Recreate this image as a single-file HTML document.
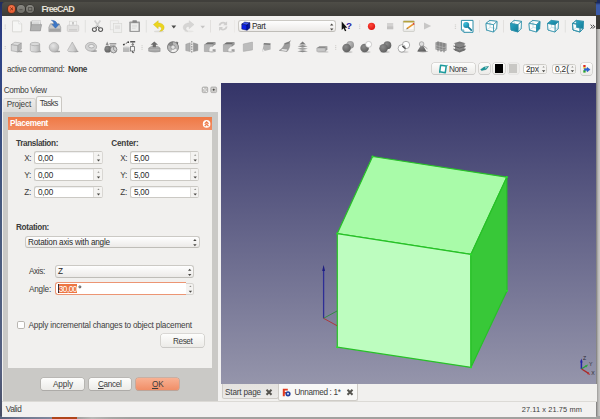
<!DOCTYPE html>
<html>
<head>
<meta charset="utf-8">
<style>
html,body{margin:0;padding:0;overflow:hidden;}
body{width:600px;height:419px;overflow:hidden;background:#2b2a28;font-family:"Liberation Sans",sans-serif;font-size:8px;color:#3c3c3c;position:relative;}
.a{position:absolute;box-sizing:border-box;}
.lbl{position:absolute;white-space:nowrap;}
.spin{position:absolute;box-sizing:border-box;height:12.5px;background:#fff;border:1px solid #cbc9c4;border-right-color:#d9d7d3;border-radius:2.5px;box-shadow:inset 0 1px 1px rgba(0,0,0,0.07);}
.spin i{position:absolute;right:0;top:0;bottom:0;width:7.8px;background:#f4f3f1;border-left:1px solid #e0deda;border-radius:0 1px 1px 0;}
.combo{position:absolute;box-sizing:border-box;background:linear-gradient(#fefefe,#eceae8);border:1px solid #cbc9c4;border-bottom-color:#bfbdb8;border-radius:3px;}
.btn{position:absolute;box-sizing:border-box;background:linear-gradient(#fdfdfc,#ecebe8);border:0 solid transparent;box-shadow:0 0 0 0.6px rgba(110,108,100,0.36),0 0.8px 0.6px rgba(0,0,0,0.10);border-radius:2.5px;}
</style>
</head>
<body>
<div id="root" style="position:absolute;left:0;top:0;width:600px;height:419px;overflow:hidden;">
<!-- desktop edges -->
<div class="a" style="left:0;top:0;width:3px;height:419px;background:linear-gradient(#1f2b58 0,#27367a 16px,#2e4388 50px,#354a82 105px,#475a7e 205px,#505f80 300px,#566080 370px,#454b62 419px);"></div>
<div class="a" style="left:596px;top:0;width:4px;height:419px;background:linear-gradient(90deg,#7c7b7a 0,#8a8988 0.6px,#b6b5b3 2px,#cbcac8 4px);"></div>
<div class="a" style="left:596px;top:15px;width:4px;height:13.8px;background:#3a3936;"></div>
<div class="a" style="left:596px;top:0;width:4px;height:15.3px;background:linear-gradient(#1c2a5c 0,#1c2a5c 2.5px,#3a5aa8 5px,#3a5aa8 100%);"></div>
<div class="a" style="left:0;top:0;width:597px;height:2px;background:#403f3b;"></div>
<div class="a" style="left:0;top:416px;width:600px;height:3px;background:linear-gradient(90deg,#56607c 0,#737b92 25px,#7f879c 50px,#a3a2a0 78px,#bab9b7 92px,#a8a7a5 112px,#a2a19f 130px,#a2a19f 100%);"></div>
<div class="a" style="left:52px;top:416.6px;width:25px;height:2.4px;background:#b0451a;"></div>

<!-- window -->
<div class="a" style="left:1.6px;top:10px;width:594.8px;height:406.7px;background:#f2f1f0;"></div>
<div class="a" style="left:1.6px;top:1.6px;width:594.9px;height:14.2px;background:linear-gradient(#4e4d47,#3c3b37);border-radius:3px 3px 0 0;"></div>
<div class="a" style="left:7.7px;top:4.9px;width:7.8px;height:7.8px;border-radius:50%;background:radial-gradient(circle at 50% 35%,#f4794f,#e24d22);box-shadow:0 0 0 0.6px #6b2710;"></div>
<div class="a" style="left:17.1px;top:4.9px;width:7.8px;height:7.8px;border-radius:50%;background:linear-gradient(#8a8983,#6c6b65);box-shadow:0 0 0 0.6px #2d2c29;"></div>
<div class="a" style="left:26.3px;top:4.9px;width:7.8px;height:7.8px;border-radius:50%;background:linear-gradient(#8a8983,#6c6b65);box-shadow:0 0 0 0.6px #2d2c29;"></div>
<svg class="a" style="left:0;top:0" width="60" height="16" viewBox="0 0 60 16">
  <path d="M10.3 7.5 L13 10.2 M13 7.5 L10.3 10.2" stroke="#6b2710" stroke-width="0.9" fill="none"/>
  <path d="M19.3 9.7 H22.5" stroke="#504f4a" stroke-width="0.9"/>
  <rect x="28.6" y="7.4" width="3.2" height="3.2" fill="none" stroke="#504f4a" stroke-width="0.8"/>
</svg>

<!-- combo view pane -->
<div class="a" style="left:2.7px;top:111.7px;width:215px;height:289.5px;background:#cac9c6;"></div>
<!-- tabs -->
<div class="a" style="left:2.5px;top:98px;width:33px;height:13.6px;background:linear-gradient(#eeedeb,#dddbd8);border:1px solid #d6d4d0;border-left-color:#e4e2df;border-bottom:none;border-radius:2.5px 2.5px 0 0;"></div>
<div class="a" style="left:35.5px;top:96.3px;width:26px;height:15.4px;background:#f8f8f7;border:1px solid #cbc8c3;border-bottom:none;border-radius:2.5px 2.5px 0 0;"></div>
<!-- float/close -->
<svg class="a" style="left:200px;top:85px" width="20" height="10" viewBox="200 85 20 10">
  <rect x="202.2" y="87" width="5.5" height="5.6" rx="1.1" fill="#c4c3c1" stroke="#a2a19f" stroke-width="0.7"/>
  <circle cx="203.7" cy="88.5" r="0.65" fill="#fff"/><circle cx="205" cy="89.9" r="0.7" fill="#fff"/><circle cx="206.3" cy="91.3" r="0.65" fill="#fff"/>
  <circle cx="206.2" cy="88.5" r="0.5" fill="#e2e1df"/><circle cx="203.8" cy="91.2" r="0.5" fill="#e2e1df"/>
  <rect x="210.8" y="87" width="5.8" height="5.6" rx="1.1" fill="#c9c8c6" stroke="#a2a19f" stroke-width="0.7"/>
  <path d="M212.2 88.3 l3 3 M215.2 88.3 l-3 3" stroke="#ecebe9" stroke-width="0.8"/>
  <circle cx="213.7" cy="89.8" r="1.05" fill="#4c4b47"/>
</svg>

<!-- group -->
<div class="a" style="left:8px;top:117px;width:204.2px;height:12.5px;background:linear-gradient(#ef7945,#f28d63);"></div>
<div class="a" style="left:8px;top:129.5px;width:204.2px;height:238.5px;background:#f1f0ee;"></div>
<svg class="a" style="left:200px;top:117px" width="12" height="13" viewBox="200 117 12 13">
  <circle cx="206.6" cy="123.9" r="3.8" fill="#fffdfb"/>
  <path d="M204.7 123.7 L206.6 121.8 L208.5 123.7 M204.7 126.1 L206.6 124.2 L208.5 126.1" stroke="#ee7a48" stroke-width="1.25" fill="none"/>
</svg>

<!-- spin boxes -->
<div class="spin" style="left:34.3px;top:151.3px;width:68.3px;"><i></i></div>
<div class="spin" style="left:34.3px;top:168.3px;width:68.3px;"><i></i></div>
<div class="spin" style="left:34.3px;top:185.5px;width:68.3px;"><i></i></div>
<div class="spin" style="left:130.3px;top:151.3px;width:69px;"><i></i></div>
<div class="spin" style="left:130.3px;top:168.3px;width:69px;"><i></i></div>
<div class="spin" style="left:130.3px;top:185.5px;width:69px;"><i></i></div>

<div class="combo" style="left:25px;top:235.8px;width:174.5px;height:12px;"></div>
<div class="combo" style="left:55px;top:265.4px;width:139.3px;height:12.2px;"></div>
<div class="a" style="left:186px;top:282.5px;width:8.4px;height:12.5px;background:#f4f3f1;border:1px solid #d6d4d0;border-left:none;border-radius:0 2.5px 2.5px 0;"></div>
<div class="a" style="left:55px;top:282.4px;width:131.4px;height:12.7px;background:#fff;border:1.2px solid #ec9573;border-right:none;border-radius:3px 0 0 3px;"></div>
<div class="a" style="left:58px;top:284.3px;width:19.1px;height:8.8px;background:#ec7643;"></div>
<div class="a" style="left:57.8px;top:284.3px;width:0.9px;height:8.8px;background:#3a2a24;"></div>

<svg class="a" style="left:76px;top:283px" width="8" height="8" viewBox="76 283 8 8"><circle cx="79.9" cy="286.9" r="1" fill="none" stroke="#3a3a3a" stroke-width="0.9"/></svg>
<!-- checkbox -->
<div class="a" style="left:17.2px;top:321.2px;width:7.5px;height:7.5px;background:#fff;border:1px solid #b9b6b1;border-radius:1.8px;"></div>
<div class="btn" style="left:161.2px;top:334.2px;width:43.3px;height:13.3px;"></div>
<div class="btn" style="left:41.4px;top:377.9px;width:42.9px;height:12.4px;"></div>
<div class="btn" style="left:88.5px;top:377.9px;width:42.9px;height:12.4px;"></div>
<div class="btn" style="left:135.6px;top:377.9px;width:43.3px;height:12.4px;background:linear-gradient(#f8b193,#f18e67);box-shadow:0 0 0 0.6px rgba(190,90,50,0.45),0 0.8px 0.6px rgba(0,0,0,0.10);"></div>

<!-- 3D view -->
<div class="a" style="left:221.2px;top:83.2px;width:375.2px;height:301px;background:linear-gradient(#343468,#9595ab);"></div>
<svg class="a" style="left:221px;top:83px;" width="376" height="301" viewBox="221 83 376 301">
  <g stroke="#27c127" stroke-width="1.2" stroke-linejoin="round">
  <polygon points="372.6,156.5 506.8,177.2 470.9,254.4 337.3,233.6" fill="#a9fba9"/>
  <polygon points="337.3,233.6 470.9,254.4 471,367.3 337.3,347.2" fill="#bdfdbf"/>
  <polygon points="470.9,254.4 506.8,177.2 507,290.8 471,367.3" fill="#38c838"/>
  </g>
  <g fill="#2ade2a"><circle cx="372.6" cy="156.5" r="1.1"/><circle cx="506.8" cy="177.2" r="1.1"/><circle cx="470.9" cy="254.4" r="1.1"/><circle cx="337.3" cy="233.6" r="1.1"/><circle cx="337.3" cy="347.2" r="1.1"/><circle cx="471" cy="367.3" r="1.1"/><circle cx="507" cy="290.8" r="1.1"/></g>
  <line x1="323.6" y1="318.3" x2="323.6" y2="269" stroke="#2e2e96" stroke-width="1.3"/>
  <polygon points="322.2,271 325,271 323.6,264.8" fill="#1d1d80"/>
  <line x1="323.6" y1="318.3" x2="337" y2="311" stroke="#2c8a3c" stroke-width="0.9"/>
  <line x1="323.6" y1="318.3" x2="337" y2="325.7" stroke="#b03030" stroke-width="0.9"/>
  <!-- corner axis -->
  <g fill="none">
    <line x1="581.4" y1="369" x2="581.4" y2="360.5" stroke="#2323a6" stroke-width="1.5"/>
    <line x1="581.6" y1="368.8" x2="586.2" y2="366" stroke="#2a9a3a" stroke-width="1.3"/>
    <line x1="581.6" y1="369" x2="588.6" y2="373.4" stroke="#a82a2a" stroke-width="1.3"/>
  </g>
  <polygon points="580.2,362.4 582.6,362.4 581.4,358.6" fill="#2323a6"/>
  <polygon points="585,365.4 586.4,367.4 588.2,364.6" fill="#2fa83f"/>
  <polygon points="587,374 588.2,372.1 590.4,374.9" fill="#b83030"/>
  <g font-family="Liberation Sans" font-size="5.2" fill="#2c2c34">
    <text x="583.1" y="359.8">Z</text><text x="588.9" y="366.2">Y</text><text x="591.2" y="375.2">X</text>
  </g>
</svg>

<!-- bottom tabs -->
<div class="a" style="left:221px;top:384.2px;width:375.5px;height:17px;background:#f1f0ee;"></div>
<div class="a" style="left:221.5px;top:384.2px;width:57px;height:15px;background:linear-gradient(#e4e2df,#ebeae8);border:1px solid #cfccc7;border-top:none;border-radius:0 0 2.5px 2.5px;"></div>
<div class="a" style="left:278px;top:384.2px;width:80.3px;height:16.8px;background:#f8f8f7;border:1px solid #cfccc7;border-top:none;border-radius:0 0 2.5px 2.5px;"></div>
<svg class="a" style="left:260px;top:386px" width="100" height="12" viewBox="260 386 100 12">
  <path d="M266.5 389.8 L271.5 394.8 M271.5 389.8 L266.5 394.8" stroke="#55544f" stroke-width="2"/>
  <path d="M347.5 389.8 L352.5 394.8 M352.5 389.8 L347.5 394.8" stroke="#55544f" stroke-width="2"/>
  <path d="M282.8 388.8 h5 v1.8 h-3 v1.3 h2.2 v1.6 h-2.2 v2.7 h-2z" fill="#e03a20"/>
  <circle cx="288" cy="393.8" r="2.6" fill="#1f3f9e"/><circle cx="288" cy="393.8" r="1" fill="#dfe6f5"/>
</svg>
<!-- status bar line -->
<div class="a" style="left:2px;top:401px;width:594.5px;height:0.8px;background:#dcdad6;"></div>

<!-- toolbar 3 controls -->
<div class="btn" style="left:432.4px;top:62.7px;width:42.3px;height:11.8px;"></div>
<div class="btn" style="left:479px;top:62.7px;width:10.7px;height:11.8px;"></div>
<div class="btn" style="left:493.2px;top:62.7px;width:11.6px;height:11.8px;"></div>
<div class="a" style="left:494.8px;top:64.4px;width:8.5px;height:8.7px;background:#000;"></div>
<div class="btn" style="left:507.6px;top:62.7px;width:11.3px;height:11.8px;background:#eeedeb;box-shadow:0 0 0 0.6px rgba(110,108,100,0.14);"></div>
<div class="a" style="left:509.1px;top:64.4px;width:8.3px;height:8.9px;background:#c9c8c5;"></div>
<div class="spin" style="left:522.7px;top:63.5px;width:24.5px;height:10.6px;border-color:#cdcbc6;"><i style="width:7px"></i></div>
<div class="spin" style="left:551.8px;top:63.5px;width:24.2px;height:10.6px;border-color:#cdcbc6;"><i style="width:7px"></i></div>
<div class="btn" style="left:581.2px;top:62.6px;width:10.4px;height:12px;"></div>
<svg class="a" style="left:430px;top:60px" width="166" height="18" viewBox="430 60 166 18">
  <path d="M440.6 65.2 l5.6 0.9 l-0.9 6.6 l-5.6 -0.9z" fill="#fff" stroke="#1c9a9c" stroke-width="1.5" stroke-linejoin="round"/>
  <path d="M439.8 71.9 l-0.3 1.2 M446.9 66 l0.4 -1.1" stroke="#1c9a9c" stroke-width="0.9"/>
  <path d="M480.6 69.6 l3.6 -2.6 l4.4 -0.6 l-2.4 3 l-4.6 1.2z" fill="#17969a" stroke="#0f6e72" stroke-width="0.4"/>
  <path d="M484.8 67.4 l2.4 -0.4 l-1.4 1.8z" fill="#bfe9ea"/>
  <rect x="583.3" y="65" width="2.3" height="2.2" fill="#e02a1e"/>
  <rect x="583.3" y="67.2" width="2.3" height="1.5" fill="#e8d020"/>
  <rect x="583.3" y="70.2" width="2.3" height="2.4" fill="#2aa82a"/>
  <path d="M584.2 68.6 h2.8 v-1.3 l3.2 2.3 l-3.2 2.3 v-1.3 h-2.8z" fill="#2a62d8" stroke="#1c459c" stroke-width="0.3"/>
</svg>

<!-- workbench combo -->
<div class="combo" style="left:238.3px;top:20.3px;width:98px;height:11.8px;"></div>

<svg class="a" style="left:0;top:0" width="600" height="419" viewBox="0 0 600 419">
<path d="M97.40 155.85 h2.2 l-1.1 -1.5z" fill="#8e8d89"/>
<path d="M96.80 159.40 h3.4 l-1.7 2z" fill="#484743"/>
<path d="M97.40 172.85 h2.2 l-1.1 -1.5z" fill="#8e8d89"/>
<path d="M96.80 176.40 h3.4 l-1.7 2z" fill="#484743"/>
<path d="M97.40 190.05 h2.2 l-1.1 -1.5z" fill="#8e8d89"/>
<path d="M96.80 193.60 h3.4 l-1.7 2z" fill="#484743"/>
<path d="M194.10 155.85 h2.2 l-1.1 -1.5z" fill="#8e8d89"/>
<path d="M193.50 159.40 h3.4 l-1.7 2z" fill="#484743"/>
<path d="M194.10 172.85 h2.2 l-1.1 -1.5z" fill="#8e8d89"/>
<path d="M193.50 176.40 h3.4 l-1.7 2z" fill="#484743"/>
<path d="M194.10 190.05 h2.2 l-1.1 -1.5z" fill="#8e8d89"/>
<path d="M193.50 193.60 h3.4 l-1.7 2z" fill="#484743"/>
<path d="M189.30 287.12 h2.2 l-1.1 -1.5z" fill="#8e8d89"/>
<path d="M188.70 290.63 h3.4 l-1.7 2z" fill="#484743"/>
<path d="M542.50 67.48 h2.2 l-1.1 -1.5z" fill="#8e8d89"/>
<path d="M541.90 70.23 h3.4 l-1.7 2z" fill="#484743"/>
<path d="M571.30 67.48 h2.2 l-1.1 -1.5z" fill="#8e8d89"/>
<path d="M570.70 70.23 h3.4 l-1.7 2z" fill="#484743"/>
<path d="M193.20 241.10 h3.4 l-1.7 -2z" fill="#484743"/>
<path d="M193.20 244.20 h3.4 l-1.7 2z" fill="#484743"/>
<path d="M188.00 270.78 h3.4 l-1.7 -2z" fill="#484743"/>
<path d="M188.00 273.94 h3.4 l-1.7 2z" fill="#484743"/>
<path d="M330.00 25.52 h3.4 l-1.7 -2z" fill="#484743"/>
<path d="M330.00 28.56 h3.4 l-1.7 2z" fill="#484743"/>
</svg>
<svg class="a" style="left:0;top:15px" width="600" height="45" viewBox="0 15 600 45">
<defs>
  <linearGradient id="gv" x1="0" y1="0" x2="1" y2="0"><stop offset="0" stop-color="#dedede"/><stop offset="0.6" stop-color="#cfcfcf"/><stop offset="1" stop-color="#b2b2b2"/></linearGradient>
  <radialGradient id="gs" cx="0.4" cy="0.35" r="0.7"><stop offset="0" stop-color="#e6e6e6"/><stop offset="1" stop-color="#b4b4b4"/></radialGradient>
  <radialGradient id="gd" cx="0.4" cy="0.35" r="0.75"><stop offset="0" stop-color="#8c8c8c"/><stop offset="1" stop-color="#5a5a5a"/></radialGradient>
  <radialGradient id="gr" cx="0.4" cy="0.35" r="0.7"><stop offset="0" stop-color="#ff4a3a"/><stop offset="1" stop-color="#dc1010"/></radialGradient>
  <radialGradient id="gt" cx="0.35" cy="0.3" r="0.8"><stop offset="0" stop-color="#3cc0dc"/><stop offset="1" stop-color="#1480a0"/></radialGradient>
  <linearGradient id="tf" x1="0" y1="0" x2="1" y2="1"><stop offset="0" stop-color="#2aa6c4"/><stop offset="1" stop-color="#117c98"/></linearGradient>
  <radialGradient id="gs2" cx="0.4" cy="0.35" r="0.7"><stop offset="0" stop-color="#bcbcbc"/><stop offset="1" stop-color="#8e8e8e"/></radialGradient>
</defs>
<!-- handles -->
<g fill="#d3d2cf">
  <rect x="4.6" y="24.6" width="1.3" height="1"/><rect x="4.6" y="26.4" width="1.3" height="1"/><rect x="4.6" y="28.2" width="1.3" height="1"/>
  <rect x="4.6" y="46" width="1.3" height="1"/><rect x="4.6" y="47.8" width="1.3" height="1"/>
  <rect x="141.4" y="45.2" width="1.3" height="1"/><rect x="141.4" y="47" width="1.3" height="1"/><rect x="141.4" y="48.8" width="1.3" height="1"/>
  <rect x="335" y="45.2" width="1.3" height="1"/><rect x="335" y="47" width="1.3" height="1"/><rect x="335" y="48.8" width="1.3" height="1"/>
  <rect x="359" y="24.4" width="1.3" height="1"/><rect x="359" y="26.2" width="1.3" height="1"/><rect x="359" y="28" width="1.3" height="1"/>
  <rect x="454.8" y="24.4" width="1.3" height="1"/><rect x="454.8" y="26.2" width="1.3" height="1"/><rect x="454.8" y="28" width="1.3" height="1"/>
</g>
<!-- separators -->
<g stroke="#dddcd9" stroke-width="0.8">
  <path d="M85.3 20 V32.5 M146.3 20 V32.5 M210.5 20 V32.5 M479.5 20 V32.5 M503.5 20 V32.5 M565.3 20 V32.5"/>
</g>
<path d="M234.5 20 V32.5" stroke="#e8e7e4" stroke-width="0.8"/>

<!-- ROW 1 -->
<!-- new -->
<path d="M12.5 20.9 h6.3 l2.9 2.9 v8 h-9.2z" fill="#f6f6f5" stroke="#d4d3d1" stroke-width="0.8"/>
<path d="M18.8 20.9 v2.9 h2.9" fill="#fff" stroke="#d4d3d1" stroke-width="0.6"/>
<!-- open -->
<path d="M30.4 21.6 h3.8 l0.9 1 h5.4 v8.2 h-10.1z" fill="#9a9a9a"/>
<rect x="32" y="20.6" width="8.2" height="6" fill="#e6e6e6" stroke="#b8b8b8" stroke-width="0.4"/>
<path d="M33 22.2 h6 M33 23.6 h6" stroke="#c4c4c4" stroke-width="0.5"/>
<path d="M30.2 30.9 l1.3 -6.3 h10.2 l-1.4 6.3z" fill="#b0b0b0" stroke="#8a8a8a" stroke-width="0.5"/>
<!-- save -->
<path d="M48.9 27.3 l1.6 -3.6 h8.6 l1.6 3.6 v4.3 h-11.8z" fill="#c9c9c9" stroke="#8f8f8f" stroke-width="0.6"/>
<rect x="49.3" y="28.6" width="11" height="2.8" fill="#a3a3a3"/>
<path d="M51.3 20.3 c3.6 0 5.6 1.6 5.7 4 h2.2 l-3.7 3.9 l-3.7 -3.9 h2.2 c0 -1.7 -0.9 -3.2 -2.7 -4z" fill="#3d77c7" stroke="#2a5aa0" stroke-width="0.4"/>
<!-- print -->
<rect x="69.3" y="21.2" width="7.4" height="4.6" fill="#f4f4f3" stroke="#d2d1cf" stroke-width="0.6"/>
<rect x="67.3" y="25.2" width="11.4" height="6.3" rx="1" fill="#e1e0df" stroke="#c6c5c3" stroke-width="0.6"/>
<rect x="69" y="29" width="8" height="1.6" fill="#cfcecd"/>
<rect x="72" y="22" width="2" height="2.6" fill="#c9c8c7"/>
<!-- cut -->
<path d="M94.6 20.4 L100 28 M100.4 20.4 L95 28" stroke="#d0d0cf" stroke-width="1.7" fill="none"/>
<ellipse cx="94.4" cy="29.6" rx="2" ry="1.9" fill="none" stroke="#595959" stroke-width="1.1"/>
<ellipse cx="100.6" cy="29.6" rx="2" ry="1.9" fill="none" stroke="#595959" stroke-width="1.1"/>
<path d="M96 28 l1.5 -1.6 l1.5 1.6" stroke="#595959" stroke-width="0.9" fill="none"/>
<!-- copy -->
<rect x="110.3" y="20.8" width="8" height="9" fill="#f1f1f0" stroke="#dddcda" stroke-width="0.7"/>
<rect x="113.4" y="23.4" width="8.3" height="9" fill="#efefee" stroke="#d8d7d5" stroke-width="0.7"/>
<rect x="115" y="25.4" width="5" height="3.6" fill="#e2e1e0"/>
<!-- paste -->
<rect x="129.3" y="21.4" width="10.7" height="10.7" rx="0.8" fill="#9b9b9b"/>
<rect x="130.8" y="23.2" width="7.7" height="7.7" fill="#eeeeed"/>
<rect x="132.4" y="20.3" width="4.5" height="2.5" rx="0.6" fill="#878787"/>
<path d="M132 25.3 h5 M132 26.8 h5 M132 28.3 h3.5" stroke="#d0d0d0" stroke-width="0.6"/>
<!-- undo -->
<ellipse cx="159" cy="31.4" rx="5" ry="0.9" fill="#dcdbd8"/>
<path d="M153.4 24.6 L158.2 20.7 V23 C162.4 23 164.4 25.4 164.1 28 C163.8 30.1 162 31.3 159.6 31.3 C161.2 30.3 161.8 28.9 161.3 27.8 C160.8 26.8 159.8 26.5 158.2 26.5 V28.7 Z" fill="#ecd51e" stroke="#cdb812" stroke-width="0.4"/>
<path d="M171.4 25.6 h4.8 l-2.4 3z" fill="#4a4a49"/>
<!-- redo (faded) -->
<ellipse cx="189" cy="31.4" rx="4.6" ry="0.8" fill="#e6e5e3"/>
<path d="M194 24.6 L189.2 20.7 V23 C185 23 183 25.4 183.3 28 C183.6 30.1 185.4 31.3 187.8 31.3 C186.2 30.3 185.6 28.9 186.1 27.8 C186.6 26.8 187.6 26.5 189.2 26.5 V28.7 Z" fill="#d6d5d4" stroke="#cac9c8" stroke-width="0.4"/>
<path d="M200.4 25.8 h4.6 l-2.3 2.8z" fill="#c6c5c4"/>
<!-- refresh (faded) -->
<path d="M218.6 25.6 a4.6 4.6 0 0 1 7.2 -3 l1.3 -1.3 v4 h-4 l1.4 -1.4 a2.7 2.7 0 0 0 -4 1.7z" fill="#cfcecd"/>
<path d="M227.6 26.6 a4.6 4.6 0 0 1 -7.2 3 l-1.3 1.3 v-4 h4 l-1.4 1.4 a2.7 2.7 0 0 0 4 -1.7z" fill="#cfcecd"/>
<!-- what's this -->
<path d="M341.7 21.6 v8.3 l1.9 -1.7 l1.4 3.1 l1.3 -0.6 l-1.4 -3 h2.4z" fill="#111"/>
<text x="345.9" y="29.2" font-family="Liberation Sans" font-weight="bold" font-size="9.8" fill="#2626a4">?</text>
<!-- record -->
<circle cx="371.5" cy="26.3" r="3.6" fill="url(#gr)"/>
<!-- stop -->
<rect x="387" y="23" width="6.2" height="6.2" fill="#d3d2d1"/>
<rect x="387" y="26.4" width="6.2" height="2.8" fill="#c2c1c0"/>
<!-- edit macro -->
<rect x="403.3" y="20.9" width="11" height="10.5" rx="0.6" fill="#fbfbf9" stroke="#bcbbb6" stroke-width="0.7"/>
<rect x="403.3" y="20.9" width="11" height="1.6" fill="#b4a23c"/>
<path d="M403.6 30 h10.4" stroke="#dad9d5" stroke-width="0.8"/>
<path d="M407.3 28.4 L413 24.4" stroke="#e8982c" stroke-width="1.7"/>
<path d="M413 24.4 l1.2 -0.9" stroke="#d83a2a" stroke-width="1.7"/>
<path d="M406.3 29.2 l1.6 -0.3 l-0.9 -1.1z" fill="#5a4a2a"/>
<!-- play -->
<path d="M424 22.4 L431.2 26 L424 29.6z" fill="#c8c7c6"/>
<!-- zoom fit -->
<path d="M461.4 20.4 h11.6 v11.9 h-9.2 l-2.4 -2.4z" fill="#fff" stroke="#2b8ea8" stroke-width="1"/>
<path d="M461.4 29.9 h2.4 v2.4" fill="none" stroke="#2b8ea8" stroke-width="0.7"/>
<path d="M468 26.8 L471.3 30.2" stroke="#187a96" stroke-width="1.7" stroke-linecap="round"/>
<circle cx="466.2" cy="24.9" r="3" fill="url(#gt)"/>
<!-- view cubes -->
<polygon points="489.8,20.4 497.0,21.4 496.6,28.6 490.1,27.4" fill="none" stroke="#2b8ea8" stroke-width="0.7" stroke-linejoin="round"/>
<polygon points="486.0,23.4 489.8,20.4 490.1,27.4 486.5,30.0" fill="none" stroke="#2b8ea8" stroke-width="0.7" stroke-linejoin="round"/>
<polygon points="486.5,30.0 490.1,27.4 496.6,28.6 493.5,32.0" fill="none" stroke="#2b8ea8" stroke-width="0.7" stroke-linejoin="round"/>
<polygon points="486.0,23.4 489.8,20.4 497.0,21.4 493.5,24.7" fill="#ffffff" stroke="#2b8ea8" stroke-width="0.7" stroke-linejoin="round" fill-opacity="0.75"/>
<polygon points="493.5,24.7 497.0,21.4 496.6,28.6 493.5,32.0" fill="#ffffff" stroke="#2b8ea8" stroke-width="0.7" stroke-linejoin="round" fill-opacity="0.75"/>
<polygon points="486.0,23.4 493.5,24.7 493.5,32.0 486.5,30.0" fill="#ffffff" stroke="#2b8ea8" stroke-width="0.7" stroke-linejoin="round" fill-opacity="0.75"/>
<polygon points="514.3,20.4 521.5,21.4 521.1,28.6 514.6,27.4" fill="none" stroke="#2b8ea8" stroke-width="0.7" stroke-linejoin="round"/>
<polygon points="510.5,23.4 514.3,20.4 514.6,27.4 511.0,30.0" fill="none" stroke="#2b8ea8" stroke-width="0.7" stroke-linejoin="round"/>
<polygon points="511.0,30.0 514.6,27.4 521.1,28.6 518.0,32.0" fill="none" stroke="#2b8ea8" stroke-width="0.7" stroke-linejoin="round"/>
<polygon points="510.5,23.4 514.3,20.4 521.5,21.4 518.0,24.7" fill="#ffffff" stroke="#2b8ea8" stroke-width="0.7" stroke-linejoin="round" fill-opacity="0.75"/>
<polygon points="518.0,24.7 521.5,21.4 521.1,28.6 518.0,32.0" fill="#ffffff" stroke="#2b8ea8" stroke-width="0.7" stroke-linejoin="round" fill-opacity="0.75"/>
<polygon points="510.5,23.4 518.0,24.7 518.0,32.0 511.0,30.0" fill="url(#tf)" stroke="#2b8ea8" stroke-width="0.7" stroke-linejoin="round"/>
<polygon points="532.8,20.4 540.0,21.4 539.6,28.6 533.1,27.4" fill="none" stroke="#2b8ea8" stroke-width="0.7" stroke-linejoin="round"/>
<polygon points="529.0,23.4 532.8,20.4 533.1,27.4 529.5,30.0" fill="none" stroke="#2b8ea8" stroke-width="0.7" stroke-linejoin="round"/>
<polygon points="529.5,30.0 533.1,27.4 539.6,28.6 536.5,32.0" fill="none" stroke="#2b8ea8" stroke-width="0.7" stroke-linejoin="round"/>
<polygon points="529.0,23.4 532.8,20.4 540.0,21.4 536.5,24.7" fill="#ffffff" stroke="#2b8ea8" stroke-width="0.7" stroke-linejoin="round" fill-opacity="0.75"/>
<polygon points="529.0,23.4 536.5,24.7 536.5,32.0 529.5,30.0" fill="#ffffff" stroke="#2b8ea8" stroke-width="0.7" stroke-linejoin="round" fill-opacity="0.75"/>
<polygon points="536.5,24.7 540.0,21.4 539.6,28.6 536.5,32.0" fill="url(#tf)" stroke="#2b8ea8" stroke-width="0.7" stroke-linejoin="round"/>
<polygon points="551.3,20.4 558.5,21.4 558.1,28.6 551.6,27.4" fill="none" stroke="#2b8ea8" stroke-width="0.7" stroke-linejoin="round"/>
<polygon points="547.5,23.4 551.3,20.4 551.6,27.4 548.0,30.0" fill="none" stroke="#2b8ea8" stroke-width="0.7" stroke-linejoin="round"/>
<polygon points="548.0,30.0 551.6,27.4 558.1,28.6 555.0,32.0" fill="none" stroke="#2b8ea8" stroke-width="0.7" stroke-linejoin="round"/>
<polygon points="555.0,24.7 558.5,21.4 558.1,28.6 555.0,32.0" fill="#ffffff" stroke="#2b8ea8" stroke-width="0.7" stroke-linejoin="round" fill-opacity="0.75"/>
<polygon points="547.5,23.4 555.0,24.7 555.0,32.0 548.0,30.0" fill="#ffffff" stroke="#2b8ea8" stroke-width="0.7" stroke-linejoin="round" fill-opacity="0.75"/>
<polygon points="547.5,23.4 551.3,20.4 558.5,21.4 555.0,24.7" fill="url(#tf)" stroke="#2b8ea8" stroke-width="0.7" stroke-linejoin="round"/>
<polygon points="572.5,23.4 576.3,20.4 576.6,27.4 573.0,30.0" fill="none" stroke="#2b8ea8" stroke-width="0.7" stroke-linejoin="round"/>
<polygon points="573.0,30.0 576.6,27.4 583.1,28.6 580.0,32.0" fill="none" stroke="#2b8ea8" stroke-width="0.7" stroke-linejoin="round"/>
<polygon points="572.5,23.4 576.3,20.4 583.5,21.4 580.0,24.7" fill="#ffffff" stroke="#2b8ea8" stroke-width="0.7" stroke-linejoin="round" fill-opacity="0.75"/>
<polygon points="580.0,24.7 583.5,21.4 583.1,28.6 580.0,32.0" fill="#ffffff" stroke="#2b8ea8" stroke-width="0.7" stroke-linejoin="round" fill-opacity="0.75"/>
<polygon points="572.5,23.4 580.0,24.7 580.0,32.0 573.0,30.0" fill="#ffffff" stroke="#2b8ea8" stroke-width="0.7" stroke-linejoin="round" fill-opacity="0.75"/>
<polygon points="576.3,20.4 583.5,21.4 583.1,28.6 576.6,27.4" fill="url(#tf)" stroke="#2b8ea8" stroke-width="0.7" stroke-linejoin="round"/>
<polygon points="572.5,23.4 580.0,24.7 580.0,32.0 573.0,30.0" fill="none" stroke="#2b8ea8" stroke-width="0.7" stroke-linejoin="round"/>
<path d="M580.0,24.7 L583.5,21.4 M572.5,23.4 L576.3,20.4 M580.0,32.0 L583.1,28.6" stroke="#2b8ea8" stroke-width="0.7" stroke-linejoin="round" fill="none"/>
<path d="M590.6 24.8 l1.9 1.9 l-1.9 1.9 M592.9 24.8 l1.9 1.9 l-1.9 1.9" stroke="#1e1e1e" stroke-width="0.9" fill="none"/>
<!-- part cube -->
<path d="M241.8 24 l5.2 0.9 v5.3 l-5.2 -1.1z" fill="#0b20e6" stroke="#000a50" stroke-width="0.5" stroke-linejoin="round"/>
<path d="M241.8 24 l2.9 -1.9 l5.2 0.7 l-2.9 2.1z" fill="#3c54f4" stroke="#000a50" stroke-width="0.5" stroke-linejoin="round"/>
<path d="M247 24.9 l2.9 -2.1 v5.2 l-2.9 2.2z" fill="#0616a8" stroke="#000a50" stroke-width="0.5" stroke-linejoin="round"/>

<!-- ROW 2 -->
<g>
<!-- cube -->
<ellipse cx="19.3" cy="51.4" rx="3.2" ry="0.9" fill="#6a6a6a" opacity="0.6"/>
<path d="M11.3 44.5 l6.6 1 v6.4 l-6.6 -1.1z" fill="#d6d6d6" stroke="#929292" stroke-width="0.5" stroke-linejoin="round"/>
<path d="M11.3 44.5 l3.6 -2.3 l6.4 0.8 l-3.4 2.5z" fill="#dcdcdc" stroke="#929292" stroke-width="0.5" stroke-linejoin="round"/>
<path d="M17.9 45.5 l3.4 -2.5 v6.1 l-3.4 2.8z" fill="#b6b6b6" stroke="#929292" stroke-width="0.5" stroke-linejoin="round"/>
<!-- cylinder -->
<ellipse cx="38" cy="51.4" rx="3.2" ry="0.9" fill="#6a6a6a" opacity="0.6"/>
<path d="M30.3 44 v6.4 a4.7 1.7 0 0 0 9.4 0 v-6.4z" fill="url(#gv)" stroke="#949494" stroke-width="0.5"/>
<ellipse cx="35" cy="44" rx="4.7" ry="1.7" fill="#dadada" stroke="#949494" stroke-width="0.5"/>
<!-- sphere -->
<ellipse cx="57" cy="51.4" rx="3.2" ry="0.9" fill="#6a6a6a" opacity="0.6"/>
<circle cx="54" cy="47.3" r="4.8" fill="url(#gs)" stroke="#9c9c9c" stroke-width="0.5"/>
<!-- cone -->
<ellipse cx="75.5" cy="51.3" rx="3.2" ry="0.9" fill="#6a6a6a" opacity="0.6"/>
<path d="M72.3 42 L77.1 50.4 a4.8 1.5 0 0 1 -9.6 0z" fill="url(#gv)" stroke="#9a9a9a" stroke-width="0.5"/>
<!-- torus -->
<ellipse cx="94" cy="51" rx="3.2" ry="0.9" fill="#6a6a6a" opacity="0.6"/>
<ellipse cx="91" cy="46.8" rx="5.6" ry="4.4" fill="#d2d2d2" stroke="#9a9a9a" stroke-width="0.6"/>
<ellipse cx="91.4" cy="46.2" rx="2.8" ry="1.7" fill="#ececec" stroke="#959595" stroke-width="0.6"/>
<!-- primitives -->
<path d="M107.2 41.6 l1.6 3.6 h-3.2z" fill="#8a8a8a"/>
<path d="M109.5 43.8 h6.8" stroke="#6a6a6a" stroke-width="0.9"/>
<rect x="110" y="44.6" width="5.5" height="3" fill="#b4b4b4"/>
<circle cx="107.8" cy="49.2" r="3.4" fill="url(#gd)"/>
<circle cx="113.6" cy="49.6" r="3.3" fill="#d0d0d0" stroke="#6e6e6e" stroke-width="0.7"/>
<path d="M113.6 49.6 v-3.3 M113.6 49.6 l2.4 2" stroke="#6e6e6e" stroke-width="0.6"/>
<!-- shape builder -->
<path d="M124.2 44.3 l3.8 -2" stroke="#5a5a5a" stroke-width="0.9" stroke-dasharray="1.2 0.8"/>
<circle cx="123.8" cy="44.6" r="0.9" fill="#3a3a3a"/><circle cx="128.2" cy="42.2" r="0.9" fill="#3a3a3a"/>
<path d="M130.2 41.8 h5" stroke="#3e3e3e" stroke-width="1.3"/>
<path d="M132.8 42.6 v2.2 m-1 -0.6 l1 1.4 l1 -1.4" stroke="#4a4a4a" stroke-width="0.8" fill="none"/>
<rect x="123" y="47.4" width="6.6" height="4.6" fill="#b9b9b9"/>
<ellipse cx="126.3" cy="47.4" rx="3.3" ry="0.9" fill="#cdcdcd"/>
<rect x="130.4" y="46.6" width="4.2" height="4.4" fill="#f2f2f2" stroke="#6a6a6a" stroke-width="0.8"/>
<path d="M132.5 51 v1.6 h1.6" stroke="#555" stroke-width="0.9" fill="none"/>
<!-- extrude -->
<ellipse cx="155" cy="51.6" rx="5.6" ry="0.8" fill="#777" opacity="0.5"/>
<path d="M148.7 48.2 l2.6 -1.8 h6.6 l2.2 1.8 v3 h-11.4z" fill="#b2b2b2" stroke="#7c7c7c" stroke-width="0.5"/>
<path d="M148.7 48.2 h11.4" stroke="#8a8a8a" stroke-width="0.5"/>
<path d="M154.3 41.4 l3.7 3.4 h-2.1 v2.4 h-3.2 v-2.4 h-2.1z" fill="#6c6c6c"/>
<!-- revolve -->
<circle cx="173" cy="47.2" r="5.5" fill="#b9b9b9"/>
<path d="M173 47.2 L173 41.7 A5.5 5.5 0 0 0 168 45z" fill="#8a8a8a"/>
<path d="M173 47.2 L177.6 50.2 A5.5 5.5 0 0 1 171 52.3z" fill="#f2f1f0"/>
<circle cx="173" cy="47.2" r="5.5" fill="none" stroke="#6c6c6c" stroke-width="0.8"/>
<circle cx="173" cy="47.2" r="2.2" fill="#e4e4e4" stroke="#777" stroke-width="0.6"/>
<path d="M176 42.2 l1.8 0.2 l-0.4 1.8" stroke="#4a4a4a" stroke-width="0.8" fill="none"/>
<!-- mirror -->
<path d="M185.8 44.2 l4.4 -1.4 v8.8 l-4.4 -1z" fill="#b0b0b0" stroke="#8a8a8a" stroke-width="0.4"/>
<path d="M197.8 44.2 l-4.4 -1.4 v8.8 l4.4 -1z" fill="#999" stroke="#808080" stroke-width="0.4"/>
<path d="M191.8 41 v12" stroke="#555" stroke-width="0.7" stroke-dasharray="1.6 0.9"/>
<!-- fillet -->
<ellipse cx="212" cy="51.6" rx="4" ry="0.8" fill="#777" opacity="0.5"/>
<path d="M204.4 44.6 l3.2 -2.4 h8 l-3 2.4z" fill="#707070"/>
<path d="M204.4 44.6 h8.2 v7 h-8.2z" fill="#b4b4b4" stroke="#868686" stroke-width="0.4"/>
<path d="M212.6 44.6 l3 -2.4 v2.2 q-2.6 0.6 -3 2.6z" fill="#909090"/>
<path d="M209.4 51.6 v-2.4 a2.4 2.4 0 0 1 2.4 -2.4 h3.8 v2.2 h-2 v2.6z" fill="#f2f1f0"/>
<path d="M212.6 49.2 h3 v2 h-3z" fill="#a0a0a0"/>
<!-- chamfer -->
<ellipse cx="231" cy="51.6" rx="4" ry="0.8" fill="#777" opacity="0.5"/>
<path d="M223.4 44.6 l3.2 -2.4 h8 l-3 2.4z" fill="#707070"/>
<path d="M223.4 44.6 h8.2 v7 h-8.2z" fill="#b4b4b4" stroke="#868686" stroke-width="0.4"/>
<path d="M231.6 44.6 l3 -2.4 v2.2 l-3 2.6z" fill="#909090"/>
<path d="M228.4 51.6 v-2.4 l2.4 -2.4 h3.8 v2.2 h-2 v2.6z" fill="#f2f1f0"/>
<path d="M231.6 49.2 h3 v2 h-3z" fill="#a0a0a0"/>
<!-- face -->
<path d="M243.3 44 l9.2 -1.9 v7.8 l-9.2 1.5z" fill="#bcbcbc" stroke="#a2a2a2" stroke-width="0.5"/>
<!-- ruled -->
<path d="M264 43 l6.6 0.4 v6.2 l-8.4 1.8z" fill="#b2b2b2"/>
<path d="M264 43 l6.6 0.4 l-0.6 1.6 l-6.6 -0.6z" fill="#7e7e7e"/>
<path d="M262.2 51.4 l1 -2.2 l1.6 1.4z" fill="#f0f0f0"/>
<!-- loft -->
<path d="M284.6 43.4 l4.6 -1.6 c1.4 3 0.2 7.2 -2.2 9.8 l-7.8 -1.2 c2.8 -1.6 4.6 -4 5.4 -7z" fill="#9c9c9c" stroke="#7c7c7c" stroke-width="0.4"/>
<path d="M289.2 41.8 l1.4 -0.9" stroke="#555" stroke-width="0.7"/>
<path d="M281 50.2 l5.4 0.8 l0.8 -1.4 l-5 -0.6z" fill="#e8e8e8"/>
<path d="M284.6 43.4 l4.6 -1.6 l0.4 1.4 l-4.6 1.4z" fill="#7a7a7a"/>
<!-- sweep -->
<path d="M302.6 41.4 l3.2 3 h-6.4z" fill="#7a7a7a"/>
<path d="M302.6 45 l5 1.2 l-5 1.2 l-5 -1.2z" fill="#8e8e8e"/>
<path d="M302.6 47.6 l5.2 1.2 l-5.2 1.2 l-5.2 -1.2z" fill="#a2a2a2"/>
<path d="M302.6 50.2 l5.2 1 l-5.2 1 l-5.2 -1z" fill="#8a8a8a"/>
<!-- offset -->
<ellipse cx="323" cy="51.9" rx="5.6" ry="0.7" fill="#777" opacity="0.45"/>
<path d="M316.8 48 l2.6 -1.8 h8 l-2 1.8z" fill="#8c8c8c"/>
<path d="M316.8 48 h8.6 v3.4 h-8.6z" fill="#c8c8c8" stroke="#8e8e8e" stroke-width="0.4"/>
<path d="M325.4 48 l2 -1.8 v3.4 l-2 1.8z" fill="#9a9a9a"/>
<!-- boolean -->
<ellipse cx="348" cy="52" rx="4.6" ry="0.7" fill="#777" opacity="0.45"/>
<circle cx="350.2" cy="44.9" r="3.8" fill="url(#gs2)"/>
<circle cx="346.6" cy="48" r="4.3" fill="url(#gd)"/>
<!-- cut -->
<ellipse cx="366" cy="52" rx="4.6" ry="0.7" fill="#777" opacity="0.45"/>
<circle cx="364.6" cy="48" r="4.3" fill="url(#gd)"/>
<circle cx="368.6" cy="44.4" r="3" fill="#fff" stroke="#a0a0a0" stroke-width="0.5"/>
<!-- fuse -->
<ellipse cx="385" cy="52" rx="4.8" ry="0.7" fill="#777" opacity="0.45"/>
<circle cx="387.4" cy="45.2" r="3.9" fill="url(#gd)"/>
<circle cx="383.6" cy="48.2" r="4.3" fill="url(#gd)"/>
<!-- common -->
<ellipse cx="404" cy="52" rx="4.6" ry="0.7" fill="#777" opacity="0.35"/>
<circle cx="406" cy="45" r="3.7" fill="#fff" stroke="#7c7c7c" stroke-width="0.6"/>
<circle cx="401.8" cy="48.4" r="3.7" fill="#fff" stroke="#7c7c7c" stroke-width="0.6"/>
<path d="M402.4 46 a3.7 3.7 0 0 1 3 2.6 a3.7 3.7 0 0 1 -3 -2.6z" fill="#555" stroke="#555" stroke-width="1"/>
<!-- section -->
<ellipse cx="423" cy="51.6" rx="5.2" ry="0.8" fill="#777" opacity="0.5"/>
<path d="M422 43.4 l4.4 8 h-9.2z" fill="url(#gd)"/>
<circle cx="421.6" cy="44" r="2.3" fill="#dedede" stroke="#8a8a8a" stroke-width="0.6"/>
<path d="M423.4 45.6 l4 3.2" stroke="#8a8a8a" stroke-width="0.7"/>
<!-- cross sections -->
<path d="M435.4 42.4 l2.6 -0.8 l8.6 2 v7 l-2.6 1 l-8.6 -2.2z" fill="#9a9a9a"/>
<path d="M438 41.6 v9.8 M441 42.4 v9.6 M444 43 v9.4" stroke="#6e6e6e" stroke-width="0.8"/>
<path d="M435.4 45.4 l8.6 2.2 l2.6 -1 M435.4 48 l8.6 2.2 l2.6 -1" stroke="#c4c4c4" stroke-width="0.5" fill="none"/>
<!-- last -->
<path d="M459.6 41.4 l6 1.8 l-6 2 l-6 -2z" fill="#7a7a7a"/>
<path d="M455 43.6 h9.6 v7 h-9.6z" fill="#868686"/>
<path d="M453.4 46 l6.2 2 l6.2 -2 M453.4 49 l6.2 2 l6.2 -2" stroke="#5e5e5e" stroke-width="0.9" fill="none"/>
<path d="M459.6 50.6 l5 -1.6 v1.4 l-5 2 l-5 -2 v-1.4z" fill="#707070"/>
</g>

</svg>
<div class="lbl" style="left:41.50px;top:4.00px;font-size:9.0px;line-height:10px;letter-spacing:-0.888px;color:#e4e0d6;font-weight:bold;">FreeCAD</div>
<div class="lbl" style="left:7.00px;top:65.00px;font-size:8.2px;line-height:10px;letter-spacing:-0.293px;color:#3c3c3c;">active command:</div>
<div class="lbl" style="left:68.00px;top:65.00px;font-size:8.2px;line-height:10px;letter-spacing:-0.367px;color:#3c3c3c;font-weight:bold;">None</div>
<div class="lbl" style="left:3.70px;top:86.00px;font-size:8.2px;line-height:10px;letter-spacing:-0.348px;color:#3c3c3c;">Combo View</div>
<div class="lbl" style="left:6.80px;top:100.00px;font-size:8.2px;line-height:10px;letter-spacing:-0.183px;color:#3c3c3c;">Project</div>
<div class="lbl" style="left:39.70px;top:99.00px;font-size:8.2px;line-height:10px;letter-spacing:-0.588px;color:#3c3c3c;">Tasks</div>
<div class="lbl" style="left:10.00px;top:119.00px;font-size:8.2px;line-height:10px;letter-spacing:-0.330px;color:#ffffff;font-weight:bold;">Placement</div>
<div class="lbl" style="left:16.00px;top:139.00px;font-size:8.2px;line-height:10px;letter-spacing:-0.367px;color:#3c3c3c;font-weight:bold;">Translation:</div>
<div class="lbl" style="left:111.30px;top:139.00px;font-size:8.2px;line-height:10px;letter-spacing:-0.196px;color:#3c3c3c;font-weight:bold;">Center:</div>
<div class="lbl" style="left:24.30px;top:154.00px;font-size:8.2px;line-height:10px;letter-spacing:-0.525px;color:#3c3c3c;">X:</div>
<div class="lbl" style="left:38.00px;top:154.00px;font-size:8.2px;line-height:10px;letter-spacing:-0.234px;color:#2a2a2a;">0,00</div>
<div class="lbl" style="left:120.30px;top:154.00px;font-size:8.2px;line-height:10px;letter-spacing:-0.525px;color:#3c3c3c;">X:</div>
<div class="lbl" style="left:134.00px;top:154.00px;font-size:8.2px;line-height:10px;letter-spacing:-0.234px;color:#2a2a2a;">5,00</div>
<div class="lbl" style="left:24.30px;top:171.00px;font-size:8.2px;line-height:10px;letter-spacing:-0.298px;color:#3c3c3c;">Y:</div>
<div class="lbl" style="left:38.00px;top:171.00px;font-size:8.2px;line-height:10px;letter-spacing:-0.234px;color:#2a2a2a;">0,00</div>
<div class="lbl" style="left:120.30px;top:171.00px;font-size:8.2px;line-height:10px;letter-spacing:-0.298px;color:#3c3c3c;">Y:</div>
<div class="lbl" style="left:134.00px;top:171.00px;font-size:8.2px;line-height:10px;letter-spacing:-0.234px;color:#2a2a2a;">5,00</div>
<div class="lbl" style="left:24.30px;top:188.00px;font-size:8.2px;line-height:10px;letter-spacing:-0.291px;color:#3c3c3c;">Z:</div>
<div class="lbl" style="left:38.00px;top:188.00px;font-size:8.2px;line-height:10px;letter-spacing:-0.234px;color:#2a2a2a;">0,00</div>
<div class="lbl" style="left:120.30px;top:188.00px;font-size:8.2px;line-height:10px;letter-spacing:-0.291px;color:#3c3c3c;">Z:</div>
<div class="lbl" style="left:134.00px;top:188.00px;font-size:8.2px;line-height:10px;letter-spacing:-0.234px;color:#2a2a2a;">5,00</div>
<div class="lbl" style="left:16.00px;top:223.00px;font-size:8.2px;line-height:10px;letter-spacing:-0.326px;color:#3c3c3c;font-weight:bold;">Rotation:</div>
<div class="lbl" style="left:28.00px;top:238.00px;font-size:8.2px;line-height:10px;letter-spacing:-0.187px;color:#2a2a2a;">Rotation axis with angle</div>
<div class="lbl" style="left:29.00px;top:267.00px;font-size:8.2px;line-height:10px;letter-spacing:-0.350px;color:#3c3c3c;">Axis:</div>
<div class="lbl" style="left:58.00px;top:267.00px;font-size:8.2px;line-height:10px;letter-spacing:-0.516px;color:#2a2a2a;">Z</div>
<div class="lbl" style="left:29.00px;top:285.00px;font-size:8.2px;line-height:10px;letter-spacing:-0.203px;color:#3c3c3c;">Angle:</div>
<div class="lbl" style="left:58.70px;top:285.00px;font-size:8.2px;line-height:10px;letter-spacing:-0.440px;color:#ffffff;">30,00</div>
<div class="lbl" style="left:28.60px;top:321.00px;font-size:8.2px;line-height:10px;letter-spacing:-0.184px;color:#3c3c3c;">Apply incremental changes to object placement</div>
<div class="lbl" style="left:173.00px;top:337.00px;font-size:8.2px;line-height:10px;letter-spacing:-0.398px;color:#3c3c3c;">Reset</div>
<div class="lbl" style="left:53.00px;top:380.00px;font-size:8.2px;line-height:10px;letter-spacing:-0.097px;color:#3c3c3c;">Apply</div>
<div class="lbl" style="left:98.00px;top:380.00px;font-size:8.2px;line-height:10px;letter-spacing:-0.333px;color:#3c3c3c;"><u>C</u>ancel</div>
<div class="lbl" style="left:152.00px;top:380.00px;font-size:8.2px;line-height:10px;letter-spacing:-0.172px;color:#3c3c3c;"><u>O</u>K</div>
<div class="lbl" style="left:225.00px;top:388.00px;font-size:8.2px;line-height:10px;letter-spacing:-0.178px;color:#3c3c3c;">Start page</div>
<div class="lbl" style="left:294.50px;top:388.00px;font-size:8.2px;line-height:10px;letter-spacing:-0.340px;color:#3c3c3c;">Unnamed : 1*</div>
<div class="lbl" style="left:5.70px;top:405.00px;font-size:8.2px;line-height:10px;letter-spacing:-0.362px;color:#3c3c3c;">Valid</div>
<div class="lbl" style="left:521.70px;top:405.00px;font-size:7.4px;line-height:10px;letter-spacing:0.106px;color:#3c3c3c;">27.11 x 21.75 mm</div>
<div class="lbl" style="left:252.00px;top:22.00px;font-size:8.2px;line-height:10px;letter-spacing:-0.383px;color:#2a2a2a;">Part</div>
<div class="lbl" style="left:449.00px;top:65.00px;font-size:8.2px;line-height:10px;letter-spacing:-0.395px;color:#3c3c3c;">None</div>
<div class="lbl" style="left:526.00px;top:65.00px;font-size:8.2px;line-height:10px;letter-spacing:-0.234px;color:#2a2a2a;">2px</div>
<div class="lbl" style="left:555.00px;top:65.00px;font-size:8.2px;line-height:10px;letter-spacing:-0.130px;color:#2a2a2a;">0,2</div>
<div class="lbl" style="left:566.20px;top:65.00px;font-size:8.2px;line-height:10px;letter-spacing:-0.734px;color:#2a2a2a;">(</div>
</div>
</body>
</html>
